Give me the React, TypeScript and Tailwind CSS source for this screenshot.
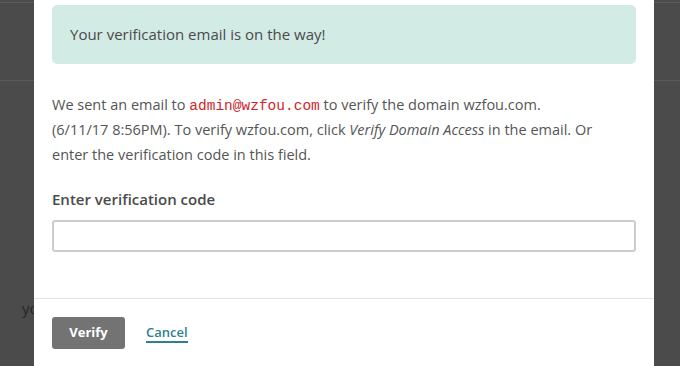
export default function App() {
  return (
    <div className="relative h-[366px] w-[680px] overflow-hidden bg-[#4b4b4b] font-['Open_Sans',sans-serif]">
      {/* Dimmed page behind */}
      <div className="mt-[2px] h-[79px] border-y border-[#5b5b5b]" />
      <p className="mt-[216px] pl-[22px] text-[15px] text-[#262626]">you</p>

      {/* Modal */}
      <div className="absolute left-[34px] top-0 flex h-[366px] w-[620px] flex-col bg-white">
        <div className="px-[18px] pt-[5px]">
          <div className="flex h-[59px] items-center rounded-[5px] bg-[#d3ebe5] px-[18px] text-[15px] text-[#4a4a4a]">
            Your verification email is on the way!
          </div>

          <p className="mt-[28px] whitespace-nowrap text-[14.5px] leading-[25px] text-[#555]">
            We sent an email to{' '}
            <span className="font-['Liberation_Mono',monospace] text-[14.5px] leading-[20px] text-[#d0262a]">admin@wzfou.com</span> to verify
            the domain wzfou.com.
            <br />
            (6/11/17 8:56PM). To verify wzfou.com, click <i>Verify Domain Access</i> in the email. Or
            <br />
            enter the verification code in this field.
          </p>

          <label className="mt-[22px] block text-[15px] font-semibold leading-[20px] text-[#4a4a4a]">
            Enter verification code
          </label>
          <input
            type="text"
            className="mt-[11px] block h-[32px] w-full rounded-[3px] border-2 border-[#cccccc] bg-white px-2 outline-none"
          />
        </div>

        <div className="mt-[46px] border-t border-[#e3e3e3] px-[18px] pt-[18px]">
          <div className="flex items-center gap-[21px]">
            <button className="h-[32px] w-[73px] rounded-[3px] bg-[#737373] text-[13px] font-bold text-white">
              Verify
            </button>
            <a className="border-b-2 border-[#2f7f93] pb-[1px] text-[13px] font-semibold leading-[16px] text-[#2f7f93]">
              Cancel
            </a>
          </div>
        </div>
      </div>
    </div>
  )
}
